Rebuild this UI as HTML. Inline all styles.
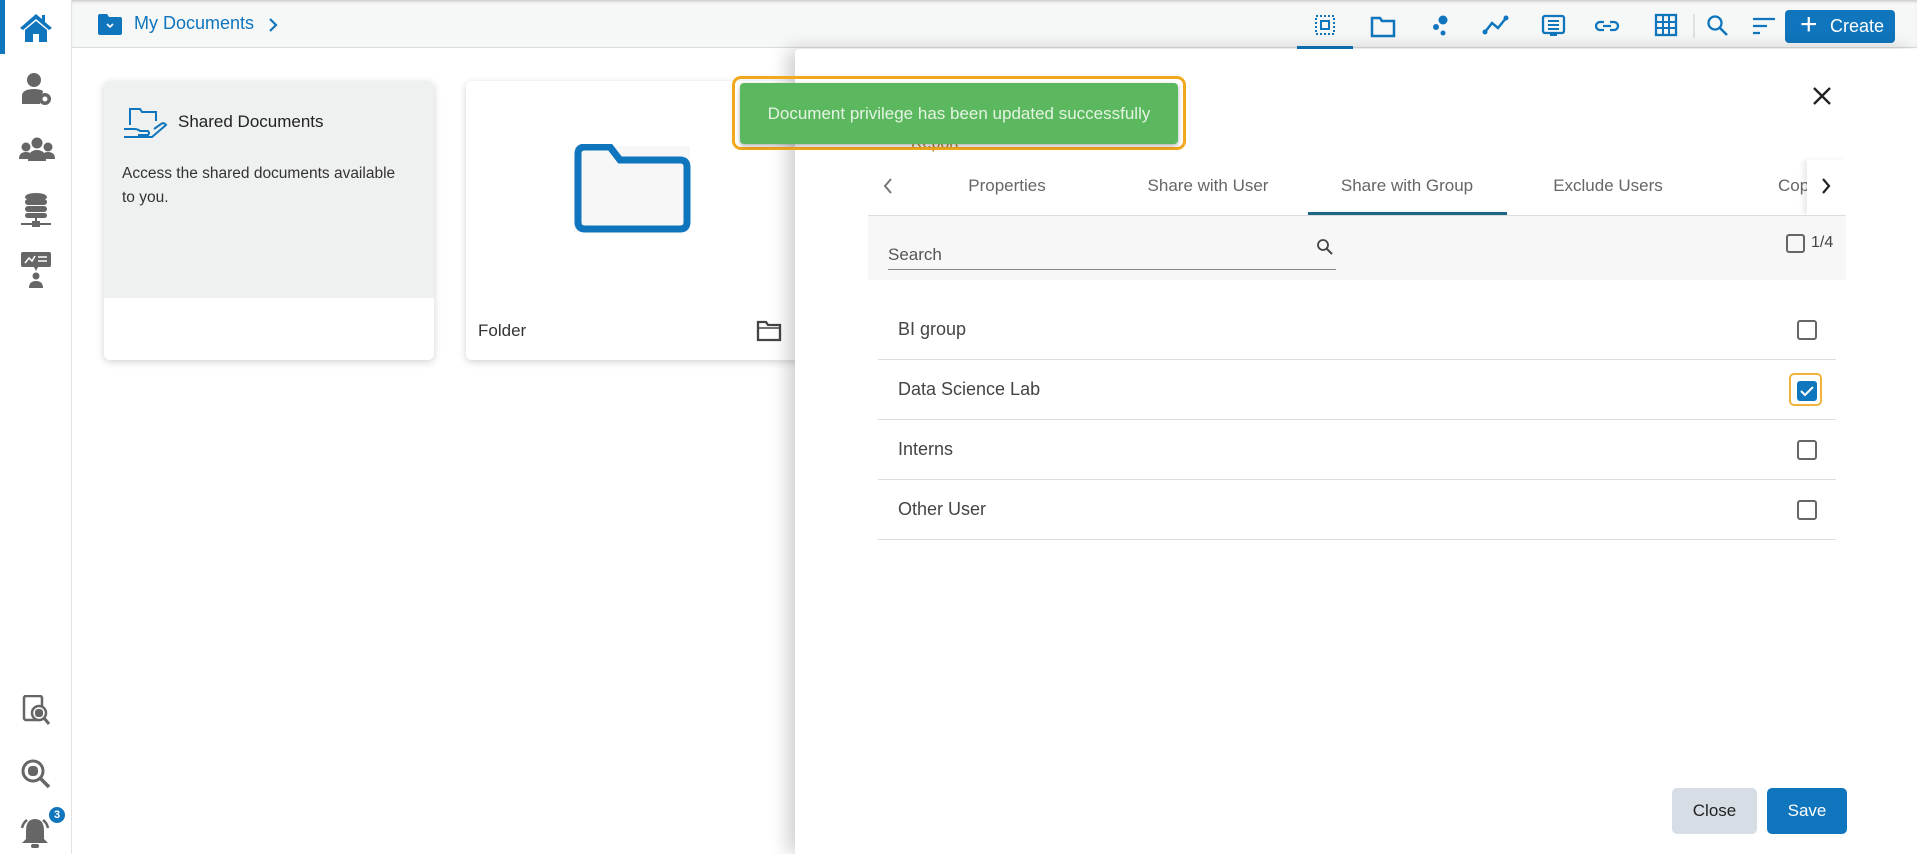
<!DOCTYPE html>
<html><head><meta charset="utf-8"><style>
*{box-sizing:border-box;margin:0;padding:0}
body{width:1917px;height:854px;overflow:hidden;background:#fff;font-family:"Liberation Sans",sans-serif;position:relative;color:#333}
.abs{position:absolute}
.side{left:0;top:0;width:72px;height:854px;background:#fff;border-right:1px solid #e2e2e2}
.top{left:72px;top:0;width:1845px;height:48px;background:#f6f7f7;border-bottom:1px solid #dcdcdc;box-shadow:inset 0 3px 3px -2px #bbb}
.card{background:#fff;border-radius:6px;box-shadow:0 2px 8px rgba(0,0,0,.18);overflow:hidden}
.panel{left:795px;top:49px;width:1122px;height:805px;background:#fff;box-shadow:-8px 0 18px rgba(0,0,0,.18);border-top-left-radius:4px}
.tab{top:176px;font-size:17px;color:#666;white-space:nowrap;transform:translateX(-50%)}
.row{left:878px;width:958px;height:60px;border-bottom:1px solid #ddd}
.row span{position:absolute;left:20px;top:19px;font-size:18px;color:#444}
.cb{width:20px;height:20px;border:2px solid #666;border-radius:3px;position:absolute;left:919px;top:20px}
</style></head><body>
<div class="abs side"></div>
<div class="abs" style="left:0;top:0;width:5px;height:54px;background:#0f75bc"></div>
<svg class="abs" style="left:18px;top:12px" width="36" height="32" viewBox="0 0 36 32"><path d="M18 2 L2 16 L5 18 L18 7 L31 18 L34 16 L27 10 V3 H24 V7 Z" fill="#0f75bc"/><path d="M7 18 L18 9 L29 18 V30 H21 V22 H15 V30 H7Z" fill="#0f75bc"/></svg>
<svg class="abs" style="left:20px;top:72px" width="34" height="34" viewBox="0 0 34 34"><circle cx="14" cy="8" r="7" fill="#666"/><path d="M2 32 V24 Q2 17 14 17 Q20 17 23 19 L20 32Z" fill="#666"/><circle cx="25" cy="27" r="6" fill="#666"/><circle cx="25" cy="27" r="2.5" fill="#fff"/></svg>
<svg class="abs" style="left:19px;top:137px" width="36" height="26" viewBox="0 0 36 26"><circle cx="18" cy="6" r="5.5" fill="#666"/><circle cx="7" cy="10" r="4.5" fill="#666"/><circle cx="29" cy="10" r="4.5" fill="#666"/><path d="M0 22 Q0 15 7 15 Q14 15 14 22Z M22 22 Q22 15 29 15 Q36 15 36 22Z M9 24 Q9 13 18 13 Q27 13 27 24Z" fill="#666"/></svg>
<svg class="abs" style="left:20px;top:192px" width="32" height="36" viewBox="0 0 32 36"><ellipse cx="16" cy="5" rx="11" ry="4" fill="#666"/><rect x="5" y="7" width="22" height="6" rx="3" fill="#666"/><rect x="5" y="14" width="22" height="6" rx="3" fill="#666"/><rect x="5" y="21" width="22" height="5" rx="2.5" fill="#666"/><rect x="15" y="26" width="2" height="6" fill="#666"/><rect x="1" y="31" width="30" height="2" fill="#666"/><rect x="12" y="29" width="8" height="6" fill="#666"/></svg>
<svg class="abs" style="left:21px;top:252px" width="30" height="36" viewBox="0 0 30 36"><rect x="0" y="0" width="30" height="15" rx="2" fill="#666"/><path d="M13 15 L15 19 L17 15Z" fill="#666"/><path d="M4 11 L8 6 L11 9 L14 4 M17 5 H26 M17 9 H26" stroke="#fff" stroke-width="1.5" fill="none"/><circle cx="15" cy="24" r="3.5" fill="#666"/><path d="M8 36 Q8 29 15 29 Q22 29 22 36Z" fill="#666"/></svg>
<svg class="abs" style="left:21px;top:695px" width="30" height="32" viewBox="0 0 30 32"><rect x="3" y="1" width="18" height="24" rx="2" fill="none" stroke="#666" stroke-width="2.5"/><circle cx="18" cy="18" r="7" fill="#fff" stroke="#666" stroke-width="2.5"/><rect x="14" y="14" width="8" height="8" rx="3" fill="#666"/><path d="M23 23 L28 29" stroke="#666" stroke-width="3"/></svg>
<svg class="abs" style="left:20px;top:758px" width="32" height="32" viewBox="0 0 32 32"><circle cx="13" cy="13" r="10" fill="none" stroke="#666" stroke-width="3"/><rect x="8" y="8" width="10" height="10" rx="4" fill="#666"/><path d="M20 20 L29 29" stroke="#666" stroke-width="3.5"/></svg>
<svg class="abs" style="left:18px;top:815px" width="34" height="36" viewBox="0 0 34 36"><path d="M17 4 Q8 4 8 16 V24 L4 28 H30 L26 24 V16 Q26 4 17 4Z" fill="#666"/><rect x="13" y="29" width="8" height="4" rx="2" fill="#666"/><path d="M4 13 Q5 8 9 5 M30 13 Q29 8 25 5" stroke="#666" stroke-width="2.5" fill="none"/></svg>
<div class="abs" style="left:49px;top:807px;width:16px;height:16px;border-radius:50%;background:#0f75bc;color:#fff;font-size:11px;font-weight:bold;text-align:center;line-height:16px">3</div>

<div class="abs top"></div>
<svg class="abs" style="left:98px;top:14px" width="24" height="21" viewBox="0 0 24 21"><path d="M0 2 Q0 0 2 0 H9 L11 3 H22 Q24 3 24 5 V19 Q24 21 22 21 H2 Q0 21 0 19Z" fill="#0f75bc"/><path d="M9 10 L12 13 L15 10" stroke="#fff" stroke-width="1.6" fill="none"/></svg>
<div class="abs" style="left:134px;top:13px;font-size:18px;color:#0f75bc">My Documents</div>
<svg class="abs" style="left:268px;top:17px" width="10" height="16" viewBox="0 0 10 16"><path d="M2 2 L8 8 L2 14" stroke="#0f75bc" stroke-width="2.2" fill="none"/></svg>
<svg class="abs" style="left:1280px;top:12px" width="470" height="28" viewBox="0 0 470 28" fill="none" stroke="#0f75bc">
<rect x="36" y="4" width="18" height="18" stroke-width="2" stroke-dasharray="2 2"/><rect x="41" y="9" width="8" height="8" stroke-width="2"/>
<path d="M92 6 H100 L102 9 H114 V24 H92Z" stroke-width="2.5"/>
<circle cx="163" cy="8" r="4.5" fill="#0f75bc" stroke="none"/><circle cx="156" cy="15" r="3" fill="#0f75bc" stroke="none"/><circle cx="163" cy="21" r="2.5" fill="#0f75bc" stroke="none"/>
<path d="M205 20 L212 11 L218 16 L226 6" stroke-width="2.5"/><circle cx="205" cy="20" r="2" fill="#0f75bc"/><circle cx="226" cy="6" r="2" fill="#0f75bc"/>
<rect x="263" y="4" width="21" height="17" rx="2" stroke-width="2.3"/><path d="M268 9 H279 M268 13 H279 M268 17 H279 M270 23 H277" stroke-width="2"/>
<path d="M324 10 H320 A4 4 0 0 0 320 18 H324 M330 10 H334 A4 4 0 0 1 334 18 H330 M323 14 H331" stroke-width="2.3"/>
<rect x="376" y="3" width="20" height="20" stroke-width="2.3"/><path d="M383 3 V23 M389 3 V23 M376 10 H396 M376 16 H396" stroke-width="2"/>
<path d="M414 2 V26" stroke="#ccc" stroke-width="1"/>
<circle cx="435" cy="11" r="6.5" stroke-width="2.3"/><path d="M440 16 L447 23" stroke-width="2.5"/>
</svg>
<svg class="abs" style="left:1752px;top:17px" width="24" height="18" viewBox="0 0 24 18"><path d="M1 2 H23 M1 9 H15 M1 16 H8" stroke="#0f75bc" stroke-width="2.3"/></svg>
<div class="abs" style="left:1297px;top:46px;width:56px;height:3px;background:#0f75bc"></div>
<div class="abs" style="left:1785px;top:10px;width:110px;height:33px;background:#0f75bc;border-radius:4px;color:#fff;font-size:18px;line-height:33px"><span style="position:absolute;left:15px;top:-2px;font-size:30px;font-weight:300">+</span><span style="position:absolute;left:45px">Create</span></div>

<div class="abs card" style="left:104px;top:81px;width:330px;height:279px">
<div style="height:217px;background:#eff0f0"></div>
<svg class="abs" style="left:18px;top:26px" width="46" height="32" viewBox="0 0 46 32" fill="none" stroke="#0f75bc" stroke-width="2"><path d="M8 18 V2 H18 L20 5 H34 V14"/><path d="M2 22 H12 Q16 22 18 24 H26 Q28 26 26 28 H16 M2 30 H30 L44 18 Q42 15 39 17 L32 22"/></svg>
<div class="abs" style="left:74px;top:31px;font-size:17px;color:#222">Shared Documents</div>
<div class="abs" style="left:18px;top:81px;width:285px;font-size:15.5px;line-height:24px;color:#333">Access the shared documents available to you.</div>
</div>
<div class="abs card" style="left:466px;top:81px;width:360px;height:279px">
<svg class="abs" style="left:106px;top:63px" width="120" height="90" viewBox="0 0 120 90"><rect x="2" y="2" width="116" height="86" fill="#f7f7f7"/><path d="M6 10 Q6 3 13 3 H38 L48 16 H108 Q115 16 115 23 V78 Q115 85 108 85 H13 Q6 85 6 78Z" fill="none" stroke="#0f75bc" stroke-width="7"/></svg>
<div class="abs" style="left:12px;top:240px;font-size:17px;color:#333">Folder</div>
<svg class="abs" style="left:290px;top:239px" width="26" height="22" viewBox="0 0 26 22"><path d="M2 2 H10 L12 5 H24 V20 H2Z" fill="none" stroke="#444" stroke-width="2.3"/><path d="M2 8 H24" stroke="#444" stroke-width="1.5"/></svg>
</div>

<div class="abs panel"></div>
<div class="abs" style="left:870px;top:83px;font-size:20px;color:#333">Permissions</div>
<div class="abs" style="left:911px;top:135px;font-size:16px;color:#b7822a">Report</div>
<svg class="abs" style="left:1812px;top:86px" width="20" height="20" viewBox="0 0 20 20"><path d="M2 2 L18 18 M18 2 L2 18" stroke="#222" stroke-width="2.4"/></svg>

<svg class="abs" style="left:882px;top:177px" width="12" height="18" viewBox="0 0 12 18"><path d="M9 2 L3 9 L9 16" stroke="#777" stroke-width="2" fill="none"/></svg>
<div class="abs tab" style="left:1007px">Properties</div>
<div class="abs tab" style="left:1208px">Share with User</div>
<div class="abs tab" style="left:1407px">Share with Group</div>
<div class="abs tab" style="left:1608px">Exclude Users</div>
<div class="abs" style="left:1778px;top:176px;font-size:17px;color:#666;width:29px;overflow:hidden">Copy</div>
<div class="abs" style="left:1807px;top:160px;width:40px;height:55px;background:#fff;box-shadow:-4px 0 5px rgba(0,0,0,.08)"></div>
<svg class="abs" style="left:1820px;top:177px" width="12" height="18" viewBox="0 0 12 18"><path d="M3 2 L9 9 L3 16" stroke="#222" stroke-width="2.2" fill="none"/></svg>
<div class="abs" style="left:868px;top:215px;width:978px;height:1px;background:#ddd"></div>
<div class="abs" style="left:1308px;top:212px;width:199px;height:3px;background:#1d6687"></div>
<div class="abs" style="left:868px;top:216px;width:978px;height:64px;background:#f7f7f7"></div>
<div class="abs" style="left:888px;top:245px;font-size:17px;color:#555">Search</div>
<div class="abs" style="left:888px;top:269px;width:448px;height:1px;background:#888"></div>
<svg class="abs" style="left:1316px;top:238px" width="18" height="18" viewBox="0 0 18 18"><circle cx="7" cy="7" r="5" fill="none" stroke="#444" stroke-width="1.8"/><path d="M11 11 L16 16" stroke="#444" stroke-width="2"/></svg>
<div class="abs" style="left:1786px;top:234px;width:19px;height:19px;border:2px solid #666;border-radius:3px"></div>
<div class="abs" style="left:1811px;top:234px;font-size:16px;color:#444">1/4</div>

<div class="abs row" style="top:300px"><span>BI group</span><div class="cb"></div></div>
<div class="abs row" style="top:360px"><span>Data Science Lab</span>
<div style="position:absolute;left:911px;top:13px;width:33px;height:33px;border:2px solid #f0b43c;border-radius:5px"></div>
<div style="position:absolute;left:919px;top:21px;width:20px;height:20px;background:#0f75bc;border-radius:3px"><svg width="20" height="20" viewBox="0 0 20 20"><path d="M4 10 L8 14 L16 6" stroke="#fff" stroke-width="2" fill="none"/></svg></div></div>
<div class="abs row" style="top:420px"><span>Interns</span><div class="cb"></div></div>
<div class="abs row" style="top:480px"><span>Other User</span><div class="cb"></div></div>

<div class="abs" style="left:1672px;top:788px;width:85px;height:46px;background:#d6dde5;border-radius:5px;text-align:center;line-height:46px;font-size:17px;color:#222">Close</div>
<div class="abs" style="left:1767px;top:788px;width:80px;height:46px;background:#0f75bc;border-radius:5px;text-align:center;line-height:46px;font-size:17px;color:#fff">Save</div>

<div class="abs" style="left:732px;top:76px;width:454px;height:74px;border:3px solid #f2a81d;border-radius:9px"></div>
<div class="abs" style="left:740px;top:83px;width:438px;height:61px;background:#5cb85f;border-radius:4px;box-shadow:0 2px 5px rgba(0,0,0,.3);color:#e4f4e2;font-size:17px;text-align:center;line-height:61px">Document privilege has been updated successfully</div>
</body></html>
